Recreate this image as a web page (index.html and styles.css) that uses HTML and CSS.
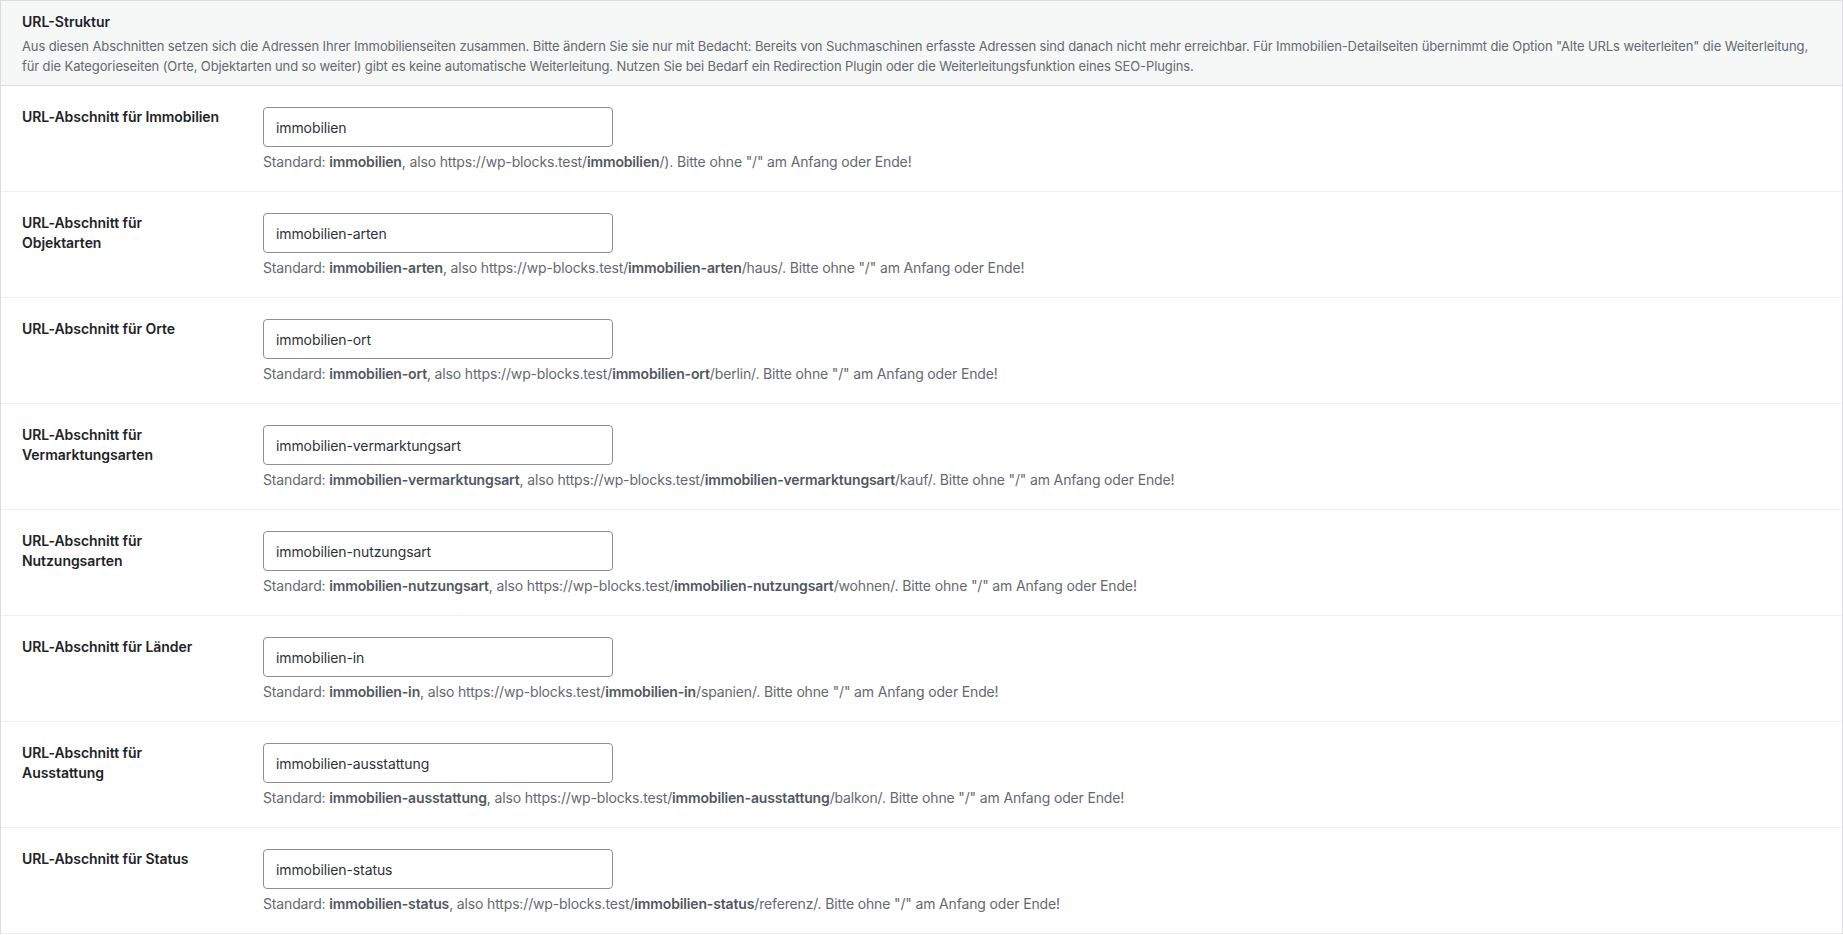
FILE: index.html
```html
<!DOCTYPE html>
<html lang="de">
<head>
<meta charset="utf-8">
<title>URL-Struktur</title>
<link rel="stylesheet" href="styles.css">
</head>
<body>
<div class="panel">
  <div class="panel-head">
    <h2 class="panel-title">URL-Struktur</h2>
    <p class="panel-desc">Aus diesen Abschnitten setzen sich die Adressen Ihrer Immobilienseiten zusammen. Bitte ändern Sie sie nur mit Bedacht: Bereits von Suchmaschinen erfasste Adressen sind danach nicht mehr erreichbar. Für Immobilien-Detailseiten übernimmt die Option "Alte URLs weiterleiten" die Weiterleitung, für die Kategorieseiten (Orte, Objektarten und so weiter) gibt es keine automatische Weiterleitung. Nutzen Sie bei Bedarf ein Redirection Plugin oder die Weiterleitungsfunktion eines SEO-Plugins.</p>
  </div>
  <div class="rows">
    <div class="row">
      <label class="row-label">URL-Abschnitt für Immobilien</label>
      <div class="row-field">
        <input class="text-input" type="text" value="immobilien">
        <p class="help">Standard: <strong>immobilien</strong>, also https://wp-blocks.test/<strong>immobilien</strong>/). Bitte ohne "/" am Anfang oder Ende!</p>
      </div>
    </div>
    <div class="row">
      <label class="row-label">URL-Abschnitt für Objektarten</label>
      <div class="row-field">
        <input class="text-input" type="text" value="immobilien-arten">
        <p class="help">Standard: <strong>immobilien-arten</strong>, also https://wp-blocks.test/<strong>immobilien-arten</strong>/haus/. Bitte ohne "/" am Anfang oder Ende!</p>
      </div>
    </div>
    <div class="row">
      <label class="row-label">URL-Abschnitt für Orte</label>
      <div class="row-field">
        <input class="text-input" type="text" value="immobilien-ort">
        <p class="help">Standard: <strong>immobilien-ort</strong>, also https://wp-blocks.test/<strong>immobilien-ort</strong>/berlin/. Bitte ohne "/" am Anfang oder Ende!</p>
      </div>
    </div>
    <div class="row">
      <label class="row-label">URL-Abschnitt für Vermarktungsarten</label>
      <div class="row-field">
        <input class="text-input" type="text" value="immobilien-vermarktungsart">
        <p class="help">Standard: <strong>immobilien-vermarktungsart</strong>, also https://wp-blocks.test/<strong>immobilien-vermarktungsart</strong>/kauf/. Bitte ohne "/" am Anfang oder Ende!</p>
      </div>
    </div>
    <div class="row">
      <label class="row-label">URL-Abschnitt für Nutzungsarten</label>
      <div class="row-field">
        <input class="text-input" type="text" value="immobilien-nutzungsart">
        <p class="help">Standard: <strong>immobilien-nutzungsart</strong>, also https://wp-blocks.test/<strong>immobilien-nutzungsart</strong>/wohnen/. Bitte ohne "/" am Anfang oder Ende!</p>
      </div>
    </div>
    <div class="row">
      <label class="row-label">URL-Abschnitt für Länder</label>
      <div class="row-field">
        <input class="text-input" type="text" value="immobilien-in">
        <p class="help">Standard: <strong>immobilien-in</strong>, also https://wp-blocks.test/<strong>immobilien-in</strong>/spanien/. Bitte ohne "/" am Anfang oder Ende!</p>
      </div>
    </div>
    <div class="row">
      <label class="row-label">URL-Abschnitt für Ausstattung</label>
      <div class="row-field">
        <input class="text-input" type="text" value="immobilien-ausstattung">
        <p class="help">Standard: <strong>immobilien-ausstattung</strong>, also https://wp-blocks.test/<strong>immobilien-ausstattung</strong>/balkon/. Bitte ohne "/" am Anfang oder Ende!</p>
      </div>
    </div>
    <div class="row">
      <label class="row-label">URL-Abschnitt für Status</label>
      <div class="row-field">
        <input class="text-input" type="text" value="immobilien-status">
        <p class="help">Standard: <strong>immobilien-status</strong>, also https://wp-blocks.test/<strong>immobilien-status</strong>/referenz/. Bitte ohne "/" am Anfang oder Ende!</p>
      </div>
    </div>
  </div>
</div>
</body>
</html>
```

FILE: styles.css
```css
* { box-sizing: border-box; }
html, body {
  margin: 0;
  padding: 0;
  background: #ffffff;
}
body {
  font-family: "Inter", "Liberation Sans", Arial, sans-serif;
  color: #1d2327;
}
.panel {
  border: 1px solid #dcdcde;
  border-bottom: 0;
  background: #ffffff;
}
.panel-head {
  background: #f6f7f7;
  border-bottom: 1px solid #dcdcde;
  padding: 10px 20px 0 21px;
  height: 85px;
}
.panel-title {
  margin: 0;
  font-size: 14px;
  line-height: 22px;
  font-weight: 600;
  color: #1d2327;
}
.panel-desc {
  margin: 3px 0 0;
  font-size: 13px;
  line-height: 20px;
  letter-spacing: -0.11px;
  color: #646970;
}
.row {
  display: flex;
  align-items: flex-start;
  padding: 21px 0 17px 21px;
  border-bottom: 1px solid #f0f0f1;
  height: 106px;
}
.row-label {
  flex: 0 0 201px;
  margin-right: 40px;
  font-size: 14px;
  line-height: 20px;
  font-weight: 600;
  letter-spacing: -0.05px;
  color: #1d2327;
}
.row-field {
  display: flex;
  flex-direction: column;
  align-items: flex-start;
}
.text-input {
  width: 350px;
  height: 40px;
  margin: 0;
  padding: 0 12px;
  border: 1px solid #8c8f94;
  border-radius: 4px;
  background: #ffffff;
  font-family: inherit;
  font-size: 14px;
  letter-spacing: -0.1px;
  color: #2c3338;
}
.help {
  margin: 4px 0 0;
  font-size: 14px;
  line-height: 21px;
  letter-spacing: -0.15px;
  color: #646970;
}
.help strong {
  font-weight: 600;
  color: #50575e;
}
```
